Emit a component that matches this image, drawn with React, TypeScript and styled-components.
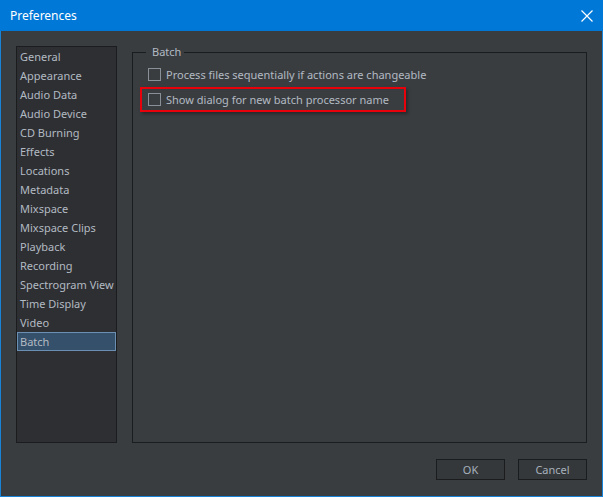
import React from "react";
import styled, { createGlobalStyle } from "styled-components";

const GlobalStyle = createGlobalStyle`
  html, body {
    margin: 0;
    padding: 0;
    background: #3a3d40;
  }
  * {
    box-sizing: border-box;
  }
`;

const Window = styled.div`
  width: 603px;
  height: 497px;
  display: flex;
  flex-direction: column;
  font-family: "Noto Sans", "Liberation Sans", sans-serif;
  font-size: 11px;
  color: #b2bac3;
`;

const TitleBar = styled.div`
  height: 31px;
  flex: none;
  background: #0078d7;
  display: flex;
  align-items: center;
  justify-content: space-between;
  padding: 0 10px 0 10px;
  color: #ffffff;
  font-size: 12px;
`;

const CloseButton = styled.div`
  width: 12px;
  height: 12px;
  display: flex;
`;

const Body = styled.div`
  flex: 1;
  display: flex;
  flex-direction: column;
  background: #3a3d40;
  border: 1px solid #1883d7;
  border-top: none;
  padding: 15px 15px 16px 15px;
`;

const Panels = styled.div`
  flex: 1;
  display: flex;
  gap: 15px;
`;

const CategoryList = styled.div`
  width: 101px;
  flex: none;
  background: #2e2f32;
  border: 1px solid #1b1c1e;
  display: flex;
  flex-direction: column;
`;

const CategoryItem = styled.div<{ selected?: boolean }>`
  height: 19px;
  line-height: 17px;
  padding-left: 2px;
  white-space: nowrap;
  border: 1px solid ${(p) => (p.selected ? "#6a8fb3" : "transparent")};
  background: ${(p) => (p.selected ? "#35506a" : "transparent")};
`;

const Group = styled.fieldset`
  flex: 1;
  margin: -2px 0 0 0;
  min-width: 0;
  border: 1px solid #1b1c1e;
  padding: 2px 0 0 7px;
`;

const Legend = styled.legend`
  margin-left: 6px;
  padding: 0 3px 0 6px;
  line-height: 16px;
  color: #b2bac3;
`;

const OptionRow = styled.div<{ highlighted?: boolean }>`
  height: 25px;
  width: 266px;
  display: flex;
  align-items: center;
  gap: 5px;
  padding-left: 6px;
  white-space: nowrap;
  border: 2px solid ${(p) => (p.highlighted ? "#e8000b" : "transparent")};
  box-shadow: ${(p) => (p.highlighted ? "2px 2px 3px rgba(0,0,0,0.35)" : "none")};
`;

const CheckBox = styled.span`
  width: 13px;
  height: 13px;
  flex: none;
  border: 1px solid #8a9098;
  background: #3a3d40;
`;

const Footer = styled.div`
  flex: none;
  display: flex;
  justify-content: flex-end;
  gap: 13px;
  margin-top: 16px;
`;

const Button = styled.button`
  width: 69px;
  height: 21px;
  background: #35383b;
  border: 1px solid #1b1c1e;
  color: #a7b1bb;
  font-family: "Noto Sans", "Liberation Sans", sans-serif;
  font-size: 11px;
  padding: 0;
`;

const categories = [
  "General",
  "Appearance",
  "Audio Data",
  "Audio Device",
  "CD Burning",
  "Effects",
  "Locations",
  "Metadata",
  "Mixspace",
  "Mixspace Clips",
  "Playback",
  "Recording",
  "Spectrogram View",
  "Time Display",
  "Video",
  "Batch",
];

export default function App() {
  return (
    <>
      <GlobalStyle />
      <Window>
        <TitleBar>
          <span>Preferences</span>
          <CloseButton>
            <svg width="12" height="12" viewBox="0 0 12 12">
              <path d="M0.5 0.5 L11.5 11.5 M11.5 0.5 L0.5 11.5" stroke="#ffffff" strokeWidth="1.2" />
            </svg>
          </CloseButton>
        </TitleBar>
        <Body>
          <Panels>
            <CategoryList>
              {categories.map((c) => (
                <CategoryItem key={c} selected={c === "Batch"}>
                  {c}
                </CategoryItem>
              ))}
            </CategoryList>
            <Group>
              <Legend>Batch</Legend>
              <OptionRow>
                <CheckBox />
                <span>Process files sequentially if actions are changeable</span>
              </OptionRow>
              <OptionRow highlighted>
                <CheckBox />
                <span>Show dialog for new batch processor name</span>
              </OptionRow>
            </Group>
          </Panels>
          <Footer>
            <Button>OK</Button>
            <Button>Cancel</Button>
          </Footer>
        </Body>
      </Window>
    </>
  );
}
